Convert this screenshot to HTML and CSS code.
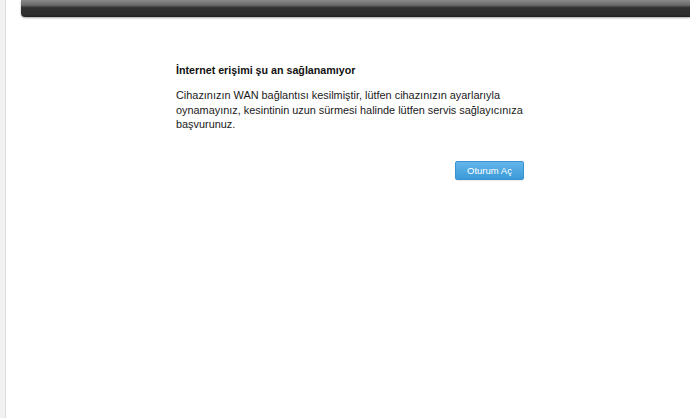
FILE: index.html
```html
<!DOCTYPE html>
<html lang="tr">
<head>
<meta charset="utf-8">
<title>İnternet erişimi</title>
<link rel="stylesheet" href="styles.css">
</head>
<body>
<div class="page">
  <div class="rail"></div>
  <div class="main">
    <div class="topbar"></div>
    <div class="content">
      <h1 class="title">İnternet erişimi şu an sağlanamıyor</h1>
      <p class="message">Cihazınızın WAN bağlantısı kesilmiştir, lütfen cihazınızın ayarlarıyla oynamayınız, kesintinin uzun sürmesi halinde lütfen servis sağlayıcınıza başvurunuz.</p>
      <div class="actions">
        <button class="login" type="button">Oturum Aç</button>
      </div>
    </div>
  </div>
</div>
</body>
</html>
```

FILE: styles.css
```css
html, body {
  margin: 0;
  padding: 0;
  height: 100%;
  background: #ffffff;
}
body {
  font-family: "Liberation Sans", Arial, sans-serif;
  color: #222222;
}
.page {
  display: flex;
  min-height: 100%;
}
.rail {
  width: 5px;
  background: #f1f1f1;
  border-right: 1px solid #dcdcdc;
  flex: none;
}
.main {
  flex: 1;
  min-width: 0;
}
.topbar {
  margin-left: 15px;
  height: 17px;
  border-bottom-left-radius: 4px;
  background: linear-gradient(to bottom, #8a8a8a 0px, #6a6a6a 5px, #5a5a5a 6px, #3a3a3a 7px, #303030 8px, #2e2e2e 15px, #1f1f1f 17px);
  box-shadow: 0 1px 2px rgba(0, 0, 0, 0.35);
}
.content {
  width: 350px;
  margin-left: 170px;
  padding-top: 47px;
}
.title {
  margin: 0;
  font-size: 10.7px;
  line-height: 13px;
  font-weight: bold;
  color: #111111;
}
.message {
  margin: 11px 0 0 0;
  font-size: 10.9px;
  line-height: 14.5px;
  color: #1a1a1a;
}
.actions {
  display: flex;
  justify-content: flex-end;
  margin-top: 29px;
  margin-right: 2px;
}
.login {
  width: 69px;
  height: 19px;
  padding: 0;
  border: 1px solid #3a92cf;
  border-radius: 2px;
  background: linear-gradient(to bottom, #62b6ea, #3c9ad8);
  color: #ffffff;
  font-family: "Liberation Sans", Arial, sans-serif;
  font-size: 9.5px;
  line-height: 17px;
  box-shadow: 0 1px 1px rgba(0, 0, 0, 0.08);
}
```
